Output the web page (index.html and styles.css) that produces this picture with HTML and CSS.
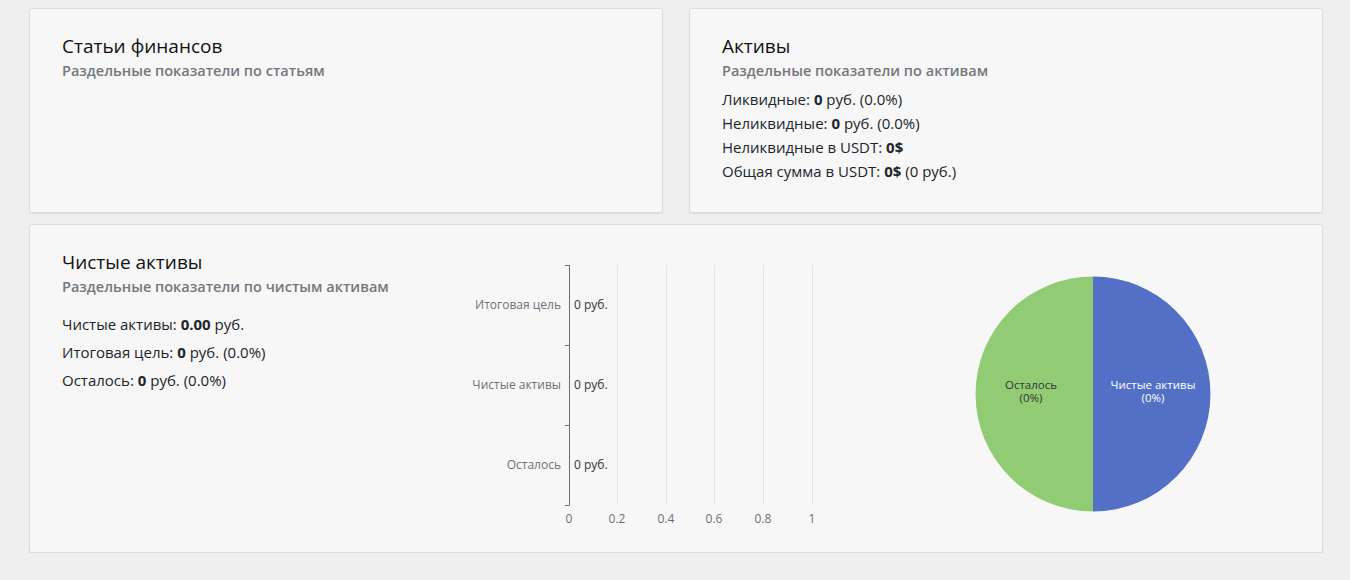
FILE: index.html
```html
<!DOCTYPE html>
<html lang="ru">
<head>
  <meta charset="UTF-8">
  <title>Финансы</title>
  <link rel="stylesheet" href="styles.css">
</head>
<body>
  <div class="grid">
    <div class="card">
      <h3>Статьи финансов</h3>
      <p class="sub">Раздельные показатели по статьям</p>
    </div>

    <div class="card">
      <h3>Активы</h3>
      <p class="sub">Раздельные показатели по активам</p>
      <div class="line">Ликвидные: <b>0</b> руб. (0.0%)</div>
      <div class="line">Неликвидные: <b>0</b> руб. (0.0%)</div>
      <div class="line">Неликвидные в USDT: <b>0$</b></div>
      <div class="line">Общая сумма в USDT: <b>0$</b> (0 руб.)</div>
    </div>

    <div class="card wide">
      <div class="net">
        <div class="net-info">
          <h3>Чистые активы</h3>
          <p class="sub">Раздельные показатели по чистым активам</p>
          <div class="line">Чистые активы: <b>0.00</b> руб.</div>
          <div class="line">Итоговая цель: <b>0</b> руб. (0.0%)</div>
          <div class="line">Осталось: <b>0</b> руб. (0.0%)</div>
        </div>

        <!-- bar chart -->
        <svg class="bars" width="400" height="290" viewBox="0 0 400 290">
          <g stroke="#e0e6f1" stroke-width="1">
            <line x1="177.5" y1="15" x2="177.5" y2="255"/>
            <line x1="226.5" y1="15" x2="226.5" y2="255"/>
            <line x1="274.5" y1="15" x2="274.5" y2="255"/>
            <line x1="323.5" y1="15" x2="323.5" y2="255"/>
            <line x1="372.5" y1="15" x2="372.5" y2="255"/>
          </g>
          <g stroke="#6e7079" stroke-width="1">
            <line x1="129.5" y1="15" x2="129.5" y2="255"/>
            <line x1="125" y1="15.5" x2="129.5" y2="15.5"/>
            <line x1="125" y1="95.5" x2="129.5" y2="95.5"/>
            <line x1="125" y1="175.5" x2="129.5" y2="175.5"/>
            <line x1="125" y1="255.5" x2="129.5" y2="255.5"/>
          </g>
          <g class="cat" text-anchor="end">
            <text x="121" y="59">Итоговая цель</text>
            <text x="121" y="139">Чистые активы</text>
            <text x="121" y="219">Осталось</text>
          </g>
          <g class="val">
            <text x="134" y="59">0 руб.</text>
            <text x="134" y="139">0 руб.</text>
            <text x="134" y="219">0 руб.</text>
          </g>
          <g class="cat" text-anchor="middle">
            <text x="129" y="273">0</text>
            <text x="177" y="273">0.2</text>
            <text x="226" y="273">0.4</text>
            <text x="274" y="273">0.6</text>
            <text x="323" y="273">0.8</text>
            <text x="372" y="273">1</text>
          </g>
        </svg>

        <!-- pie chart -->
        <svg class="pie" width="240" height="290" viewBox="0 0 240 290">
          <path d="M120 26.5 A117.5 117.5 0 0 0 120 261.5 Z" fill="#91cc75"/>
          <path d="M120 26.5 A117.5 117.5 0 0 1 120 261.5 Z" fill="#5470c6"/>
          <text class="pie-label dark" text-anchor="middle" x="58" y="139">Осталось<tspan x="58" dy="12.5">(0%)</tspan></text>
          <text class="pie-label light" text-anchor="middle" x="180" y="139">Чистые активы<tspan x="180" dy="12.5">(0%)</tspan></text>
        </svg>
      </div>
    </div>
  </div>
</body>
</html>
```

FILE: styles.css
```css
body {
  margin: 0;
  background: #efefef;
  font-family: 'Open Sans', 'Noto Sans', sans-serif;
  color: #212529;
}
.grid {
  display: grid;
  grid-template-columns: 1fr 1fr;
  column-gap: 26px;
  row-gap: 11px;
  padding: 8px 27px 0 29px;
}
.card {
  background: #f7f7f7;
  border: 1px solid #dcdcdc;
  border-radius: 3px;
  box-shadow: 0 1px 1px rgba(0, 0, 0, 0.08);
  padding: 25px 32px 29px;
}
.card.wide {
  grid-column: 1 / 3;
  padding-bottom: 12px;
}
h3 {
  margin: 0;
  font-size: 19px;
  font-weight: 500;
  line-height: 24px;
  color: #111;
}
.sub {
  margin: 2px 0 5px;
  font-size: 14.5px;
  font-weight: 600;
  line-height: 22px;
  color: #74787c;
}
.line {
  font-size: 15px;
  line-height: 24px;
}
.line b {
  font-weight: 700;
}
.net {
  display: flex;
  align-items: flex-start;
}
.net-info {
  width: 378px;
  flex: none;
}
.net-info .sub {
  margin-bottom: 12px;
}
.net-info .line {
  line-height: 28px;
}
.bars {
  flex: none;
  display: block;
}
.pie {
  flex: none;
  display: block;
  margin-left: 133px;
}
.cat {
  font-size: 12px;
  fill: #6e7079;
}
.val {
  font-size: 12px;
  fill: #333;
}
.pie-label {
  font-size: 11.5px;
}
.pie-label.dark {
  fill: #333;
}
.pie-label.light {
  fill: #fff;
}
```
